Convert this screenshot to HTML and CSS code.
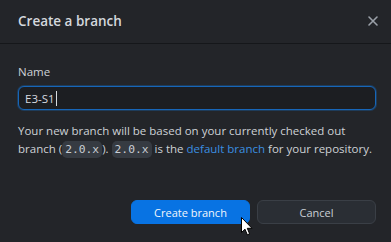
FILE: index.html
```html
<!DOCTYPE html>
<html>
<head>
<meta charset="utf-8">
<link rel="stylesheet" href="styles.css">
</head>
<body>
<div class="dialog">
  <div class="header">
    <h1 class="title">Create a branch</h1>
    <button class="close" aria-label="Close">
      <svg width="12" height="12" viewBox="0 0 12 12"><path d="M2 2L10 10M10 2L2 10" stroke="#9ba1a9" stroke-width="1.6" stroke-linecap="round"/></svg>
    </button>
  </div>
  <div class="body">
    <label class="label">Name</label>
    <div class="input"><span class="value">E3-S1</span><span class="caret"></span></div>
    <p class="desc">Your new branch will be based on your currently checked out branch (<code class="code">2.0.x</code>). <code class="code">2.0.x</code> is the <a class="link">default branch</a> for your repository.</p>
  </div>
  <div class="footer">
    <button class="btn primary">Create branch</button>
    <button class="btn secondary">Cancel</button>
    <svg class="cursor" width="12" height="19" viewBox="0 0 12 19"><path d="M0.5 0.5L0.5 15.5L4 12.2L6.3 17.8L8.6 16.8L6.3 11.3L11 11.3Z" fill="#fff" stroke="#000" stroke-width="1"/></svg>
  </div>
</div>
</body>
</html>
```
FILE: styles.css
```css
html, body { margin: 0; padding: 0; }
body {
  width: 391px; height: 242px; overflow: hidden;
  background: #232529;
  font-family: "Open Sans", "Noto Sans", sans-serif;
  color: #cdd1d6;
}
.dialog { display: flex; flex-direction: column; height: 242px; }
.header {
  height: 44px; box-sizing: border-box;
  border-bottom: 1px solid #15171a;
  display: flex; align-items: center; justify-content: space-between;
  padding: 0 8px 2px 18px;
}
.title { margin: 0; font-size: 13.5px; font-weight: 600; color: #d4d8dd; }
.close { background: none; border: 0; padding: 4px; display: flex; }
.body { padding: 19px 15px 0 18px; display: flex; flex-direction: column; }
.label { font-size: 11.5px; color: #cdd1d6; line-height: 17px; }
.input {
  margin-top: 6px; height: 24px; box-sizing: border-box;
  border: 1px solid #1766b8; border-radius: 6px;
  background: #1c1e22;
  box-shadow: 0 0 0 1px rgba(23,102,184,0.35);
  display: flex; align-items: center; padding-left: 6px;
  font-size: 11.5px; color: #d7dbe0;
}
.caret { width: 1px; height: 15px; background: #d7dbe0; margin-left: 1px; }
.desc { margin: 12px 0 0; font-size: 11.5px; line-height: 18px; color: #cdd1d6; }
.code {
  display: inline-block; line-height: 15px;
  font-family: "DejaVu Sans Mono", monospace; font-size: 11.3px;
  background: #363b42; border-radius: 5px; padding: 1px 3px; color: #c9ced4;
}
.link { color: #3b8fe0; }
.footer {
  margin-top: auto; padding: 0 15px 18px 0;
  display: flex; justify-content: flex-end; gap: 7px; position: relative;
}
.btn {
  width: 119px; height: 24px; border-radius: 6px;
  font-family: inherit; font-size: 11px; padding: 0;
}
.primary { background: #0873e3; border: 1px solid #0873e3; color: #f2f6fb; }
.secondary { background: #2a2e34; border: 1px solid #3a3f46; color: #c9ced4; }
.cursor { position: absolute; left: 241px; top: 17px; }
```
